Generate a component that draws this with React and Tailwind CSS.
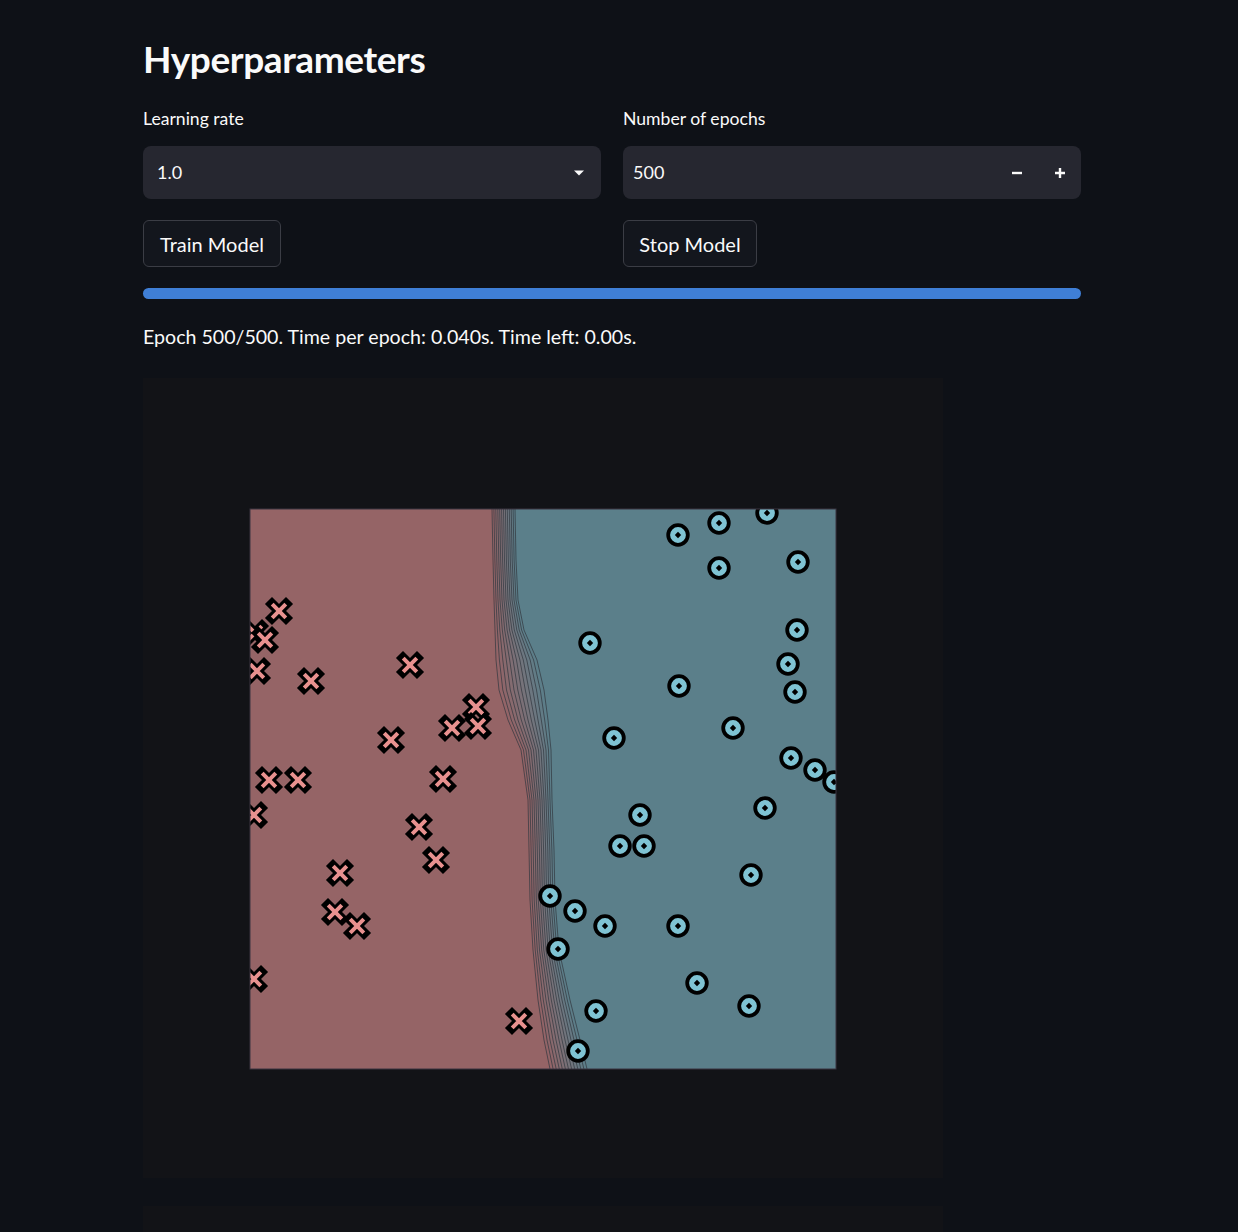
import React from "react";

const FONT = { fontFamily: "Lato, 'Open Sans', sans-serif" };

// figure is 800x800, page offset (143, 378); axes in figure coords
const AX = { x: 107, y: 131, w: 586, h: 560 };
const OX = 143;
const OY = 378;

const crosses = [
  [279, 611], [255, 633], [265, 640], [257, 671], [311, 681], [410, 665],
  [476, 707], [452, 728], [478, 726], [391, 740], [269, 780], [298, 780],
  [443, 779], [254, 815], [419, 827], [436, 860], [340, 873], [335, 912],
  [357, 926], [254, 979], [519, 1021],
];

const circles = [
  [678, 535], [719, 523], [767, 513], [719, 568], [798, 562], [590, 643],
  [797, 630], [788, 664], [795, 692], [679, 686], [733, 728], [614, 738],
  [791, 758], [815, 770], [834, 782], [765, 808], [640, 815], [620, 846],
  [644, 846], [751, 875], [550, 896], [575, 911], [605, 926], [678, 926],
  [558, 949], [697, 983], [749, 1006], [596, 1011], [578, 1051],
];

// decision boundary band, left and right edge of the contour lines
const ys = [509, 560, 600, 630, 660, 690, 720, 750, 800, 850, 900, 950, 1000, 1040, 1069];
const leftX = [492, 493, 494, 495, 496, 499, 508, 521, 528, 529, 530, 533, 538, 544, 550];
const rightX = [515, 516, 518, 524, 537, 544, 548, 551, 552, 554, 555, 559, 570, 580, 587];
const LEVELS = 12;

const mix = (a, b, t) => {
  const pa = [parseInt(a.slice(1, 3), 16), parseInt(a.slice(3, 5), 16), parseInt(a.slice(5, 7), 16)];
  const pb = [parseInt(b.slice(1, 3), 16), parseInt(b.slice(3, 5), 16), parseInt(b.slice(5, 7), 16)];
  return `rgb(${pa.map((v, i) => Math.round(v + (pb[i] - v) * t)).join(",")})`;
};

const levelPoints = (t) =>
  ys.map((y, i) => [leftX[i] + (rightX[i] - leftX[i]) * t - OX, y - OY]);

const toPath = (pts) => pts.map((p, i) => `${i ? "L" : "M"}${p[0].toFixed(1)} ${p[1]}`).join(" ");

const Cross = ({ x, y }) => {
  const cx = x - OX;
  const cy = y - OY;
  return (
    <g>
      <path
        d={`M${cx - 7} ${cy - 7} L${cx + 7} ${cy + 7} M${cx + 7} ${cy - 7} L${cx - 7} ${cy + 7}`}
        stroke="#000"
        strokeWidth="10"
        strokeLinecap="square"
      />
      <path
        d={`M${cx - 6.8} ${cy - 6.8} L${cx + 6.8} ${cy + 6.8} M${cx + 6.8} ${cy - 6.8} L${cx - 6.8} ${cy + 6.8}`}
        stroke="#e8918f"
        strokeWidth="4"
        strokeLinecap="butt"
      />
    </g>
  );
};

const Dot = ({ x, y }) => {
  const cx = x - OX;
  const cy = y - OY;
  return (
    <g>
      <circle cx={cx} cy={cy} r="9.8" fill="#7fc3d3" stroke="#000" strokeWidth="3.8" />
      <path d={`M${cx} ${cy - 3.2} L${cx + 3.2} ${cy} L${cx} ${cy + 3.2} L${cx - 3.2} ${cy} Z`} fill="#000" />
    </g>
  );
};

const BoundaryPlot = () => {
  const bands = [];
  for (let i = 0; i < LEVELS; i++) {
    const a = levelPoints(i / LEVELS);
    const b = levelPoints((i + 1) / LEVELS);
    const poly = [...a, ...b.slice().reverse()];
    bands.push(
      <path
        key={`b${i}`}
        d={toPath(poly) + " Z"}
        fill={mix("#956466", "#5b7f8a", (i + 0.5) / LEVELS)}
      />
    );
  }
  const left = levelPoints(0);
  const redPoly = [[AX.x, AX.y], ...left, [AX.x, AX.y + AX.h]];

  return (
    <svg width="800" height="800" viewBox="0 0 800 800" className="block">
      <defs>
        <clipPath id="axclip">
          <rect x={AX.x} y={AX.y} width={AX.w} height={AX.h} />
        </clipPath>
      </defs>
      <g clipPath="url(#axclip)">
        <rect x={AX.x} y={AX.y} width={AX.w} height={AX.h} fill="#5b7f8a" />
        <path d={toPath(redPoly) + " Z"} fill="#956466" />
        {bands}
        {Array.from({ length: LEVELS + 1 }).map((_, i) => (
          <path
            key={`l${i}`}
            d={toPath(levelPoints(i / LEVELS))}
            fill="none"
            stroke="#2a2a30"
            strokeOpacity="0.75"
            strokeWidth="0.8"
          />
        ))}
        {crosses.map(([x, y], i) => (
          <Cross key={`x${i}`} x={x} y={y} />
        ))}
        {circles.map(([x, y], i) => (
          <Dot key={`o${i}`} x={x} y={y} />
        ))}
      </g>
      <rect
        x={AX.x}
        y={AX.y}
        width={AX.w}
        height={AX.h}
        fill="none"
        stroke="#3b3540"
        strokeWidth="1"
      />
    </svg>
  );
};

const App = () => {
  return (
    <div className="min-h-[1232px] bg-[#0e1117] text-[#fafafa] overflow-hidden" style={FONT}>
      <div className="ml-[143px] w-[938px]">
        {/* Header */}
        <h2 className="pt-[36px] text-[37px] leading-[46px] font-bold tracking-[-0.4px]">
          Hyperparameters
        </h2>

        {/* Inputs */}
        <div className="mt-[25px] grid grid-cols-2 gap-[22px]">
          <div>
            <label className="block text-[17.6px] leading-[24px] h-[39px]">Learning rate</label>
            <div className="flex items-center justify-between h-[53px] rounded-lg bg-[#262730] pl-[14px] pr-[16px]">
              <span className="text-[18px]">1.0</span>
              <svg width="12" height="8" viewBox="0 0 12 8">
                <path d="M1 1.5 L11 1.5 L6 6.5 Z" fill="#fafafa" />
              </svg>
            </div>
            <button className="mt-[21px] h-[47px] w-[138px] rounded-md border border-[#3b3d45] bg-[#13161d] text-[20px]">
              Train Model
            </button>
          </div>
          <div>
            <label className="block text-[17.6px] leading-[24px] h-[39px]">Number of epochs</label>
            <div className="flex items-center h-[53px] rounded-lg bg-[#262730]">
              <span className="flex-1 pl-[10px] text-[18px]">500</span>
              <button className="w-[43px] h-full flex items-center justify-center">
                <svg width="12" height="12" viewBox="0 0 12 12">
                  <path d="M1 6 H11" stroke="#fafafa" strokeWidth="2.4" />
                </svg>
              </button>
              <button className="w-[43px] h-full flex items-center justify-center">
                <svg width="12" height="12" viewBox="0 0 12 12">
                  <path d="M1 6 H11 M6 1 V11" stroke="#fafafa" strokeWidth="2.4" />
                </svg>
              </button>
            </div>
            <button className="mt-[21px] h-[47px] w-[134px] rounded-md border border-[#3b3d45] bg-[#13161d] text-[20px]">
              Stop Model
            </button>
          </div>
        </div>

        {/* Progress */}
        <div className="mt-[21px] h-[11px] rounded-full bg-[#3f7fd6]" />
        <p className="mt-[24px] text-[19.6px] leading-[28px]">
          Epoch 500/500. Time per epoch: 0.040s. Time left: 0.00s.
        </p>

        {/* Figure */}
        <div className="mt-[27px] w-[800px] h-[800px] bg-[#121317]">
          <BoundaryPlot />
        </div>
        <div className="mt-[28px] w-[800px] h-[40px] bg-[#121317]" />
      </div>
    </div>
  );
};

export default App;
